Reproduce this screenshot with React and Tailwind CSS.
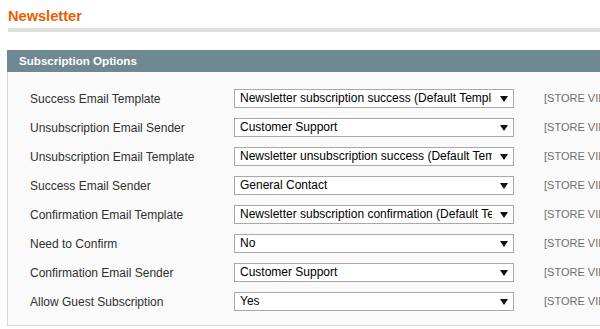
import React from "react";

const rows = [
  ["Success Email Template", "Newsletter subscription success (Default Template from Locale)"],
  ["Unsubscription Email Sender", "Customer Support"],
  ["Unsubscription Email Template", "Newsletter unsubscription success (Default Template from Locale)"],
  ["Success Email Sender", "General Contact"],
  ["Confirmation Email Template", "Newsletter subscription confirmation (Default Template from Locale)"],
  ["Need to Confirm", "No"],
  ["Confirmation Email Sender", "Customer Support"],
  ["Allow Guest Subscription", "Yes"],
];

function Select({ value }) {
  return (
    <div className="flex h-[19px] w-[280px] shrink-0 items-center border border-[#a9a9a9] bg-white">
      <div className="w-[257px] shrink-0 overflow-hidden whitespace-nowrap pl-[5px] text-[12px] leading-[17px] text-black">
        {value}
      </div>
      <svg width="8" height="6" viewBox="0 0 8 6" className="ml-[8px] shrink-0">
        <polygon points="0,0 8,0 4,6" fill="#111" />
      </svg>
    </div>
  );
}

export default function App() {
  return (
    <div className="h-[329px] w-[600px] overflow-hidden bg-white font-['Liberation_Sans',Arial,sans-serif]">
      <div className="w-[640px]">
        <div className="ml-[8px] mt-[7px] text-[14.6px] font-bold leading-[18px] text-[#eb5e00]">
          Newsletter
        </div>
        <div className="ml-[8px] mt-[3px] h-[4px] bg-[#dfdfdf]" />
        <div className="ml-[7px] mt-[18px]">
          <div className="flex h-[22px] items-center bg-[#6f8992] pl-[12px] text-[11.6px] font-bold text-white">
            Subscription Options
          </div>
          <div className="flex flex-col gap-[10px] border-x border-b border-[#d6d6d6] bg-[#fafafa] pb-[14px] pl-[22px] pt-[17px]">
            {rows.map(([label, value]) => (
              <div key={label} className="flex items-center">
                <div className="w-[204px] shrink-0 text-[12px] text-[#303030]">{label}</div>
                <Select value={value} />
                <div className="ml-[30px] whitespace-nowrap text-[11px] text-[#6f6f6f]">[STORE VIEW]</div>
              </div>
            ))}
          </div>
        </div>
      </div>
    </div>
  );
}
